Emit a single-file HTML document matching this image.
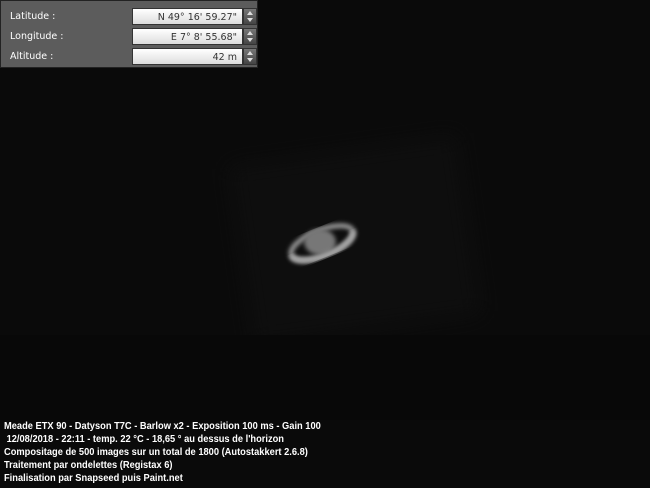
<!DOCTYPE html>
<html><head><style>
body{margin:0;width:650px;height:488px;background:#0a0a0a;overflow:hidden;position:relative;font-family:"DejaVu Sans","Liberation Sans",sans-serif}
.panel{position:absolute;left:0;top:0;width:256px;height:66px;background:#5c5c5c;border:1px solid #222;}
.row{position:absolute;left:0;width:256px;height:17px}
.lab{position:absolute;left:9px;top:3px;font-size:9.5px;color:#fff}
.box{position:absolute;left:131px;top:0;width:111px;height:17px;background:linear-gradient(#fff,#ddd);border:1px solid #333;box-sizing:border-box;font-size:9.5px;color:#333;text-align:right;padding-right:5px;line-height:17px}
.sp{position:absolute;left:242px;top:0;width:14px;height:17px;background:linear-gradient(#777,#444);border:1px solid #333;box-sizing:border-box}
.sp:before{content:"";position:absolute;left:3px;top:2px;border:3px solid transparent;border-bottom:4px solid #ddd;border-top:0}
.sp:after{content:"";position:absolute;left:3px;bottom:2px;border:3px solid transparent;border-top:4px solid #ddd;border-bottom:0}
.txt{position:absolute;left:4px;top:420px;color:#fff;font-size:10px;line-height:13px;font-family:"Liberation Sans",sans-serif;font-weight:bold;white-space:pre;transform:scaleX(0.93);transform-origin:0 0}
</style></head><body>
<div style="position:absolute;left:240px;top:150px;width:230px;height:180px;background:#0e0e0e;transform:rotate(-8deg);filter:blur(10px)"></div>
<div style="position:absolute;left:0;top:335px;width:650px;height:85px;background:#080808"></div>
<div class="panel">
<div class="row" style="top:7px"><span class="lab">Latitude :</span><div class="box">N 49° 16' 59.27"</div><div class="sp"></div></div>
<div class="row" style="top:27px"><span class="lab">Longitude :</span><div class="box">E 7° 8' 55.68"</div><div class="sp"></div></div>
<div class="row" style="top:47px"><span class="lab">Altitude :</span><div class="box">42 m</div><div class="sp"></div></div>
</div>
<svg style="position:absolute;left:270px;top:200px" width="110" height="90">
<defs><filter id="b"><feGaussianBlur stdDeviation="2"/></filter></defs>
<g transform="rotate(-22 52 43)" filter="url(#b)">
<ellipse cx="52" cy="43" rx="33" ry="13" fill="none" stroke="#999" stroke-width="5"/>
</g>
<ellipse cx="50" cy="42" rx="16" ry="13" fill="#777" filter="url(#b)"/>
<g transform="rotate(-22 52 43)" filter="url(#b)">
<path d="M19 43 A33 13 0 0 0 85 43" fill="none" stroke="#aaa" stroke-width="5"/>
</g>
</svg>
<div class="txt">Meade ETX 90 - Datyson T7C - Barlow x2 - Exposition 100 ms - Gain 100
 12/08/2018 - 22:11 - temp. 22 °C - 18,65 ° au dessus de l'horizon
Compositage de 500 images sur un total de 1800 (Autostakkert 2.6.8)
Traitement par ondelettes (Registax 6)
Finalisation par Snapseed puis Paint.net</div>
</body></html>
